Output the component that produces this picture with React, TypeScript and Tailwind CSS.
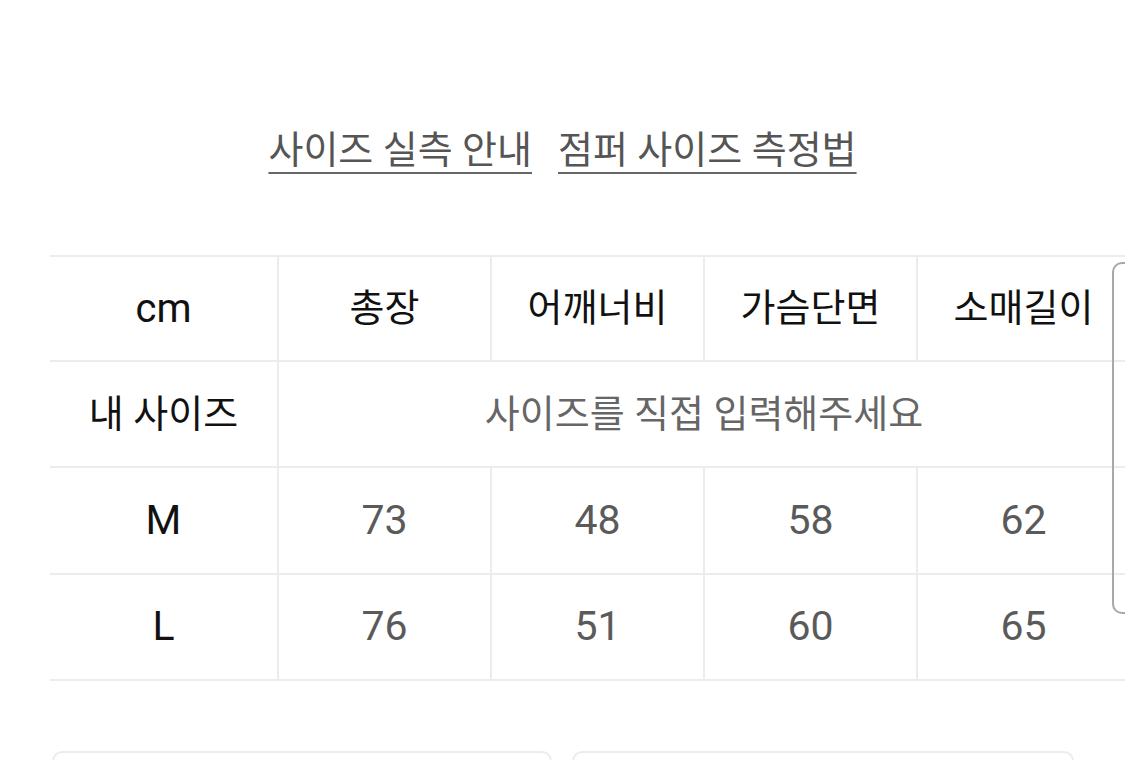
const font = "font-['Roboto','Noto_Sans_CJK_KR',sans-serif]";

const columns = ["총장", "어깨너비", "가슴단면", "소매길이"];
const sizes = [
  { name: "M", values: [73, 48, 58, 62], h: "h-[107px]" },
  { name: "L", values: [76, 51, 60, 65], h: "h-[106px]" },
];

function Cell({ children, first, className = "" }: { children: React.ReactNode; first?: boolean; className?: string }) {
  return (
    <div
      className={`flex h-full items-center justify-center ${first ? "w-[227px]" : "w-[213px] border-l-2 border-[#ececec]"} ${className}`}
    >
      {children}
    </div>
  );
}

export default function App() {
  return (
    <main className={`min-h-[760px] w-[1125px] overflow-hidden bg-white ${font}`}>
      <div className="flex justify-center gap-[26px] pt-[122px] text-[38px] leading-[56px] text-[#555]">
        <a className="underline decoration-[#666] decoration-[2px] underline-offset-[9px]">사이즈 실측 안내</a>
        <a className="underline decoration-[#666] decoration-[2px] underline-offset-[9px]">점퍼 사이즈 측정법</a>
      </div>

      <div className="relative mt-[77px] pl-[50px]">
        <div className="w-[1100px] border-t-2 border-[#ececec]">
          <div className="flex h-[105px] border-b-2 border-[#ececec] text-[38px] text-[#111]">
            <Cell first className="text-[40px]">cm</Cell>
            {columns.map((c) => (
              <Cell key={c}>{c}</Cell>
            ))}
          </div>
          <div className="flex h-[106px] border-b-2 border-[#ececec] text-[38px]">
            <Cell first className="text-[#111]">내 사이즈</Cell>
            <div className="flex h-full w-[852px] items-center justify-center border-l-2 border-[#ececec] text-[#666]">
              사이즈를 직접 입력해주세요
            </div>
          </div>
          {sizes.map((s) => (
            <div key={s.name} className={`flex border-b-2 border-[#ececec] text-[41px] ${s.h}`}>
              <Cell first className="text-[#111]">{s.name}</Cell>
              {s.values.map((v, i) => (
                <Cell key={i} className="text-[#5a5a5a]">{v}</Cell>
              ))}
            </div>
          ))}
        </div>
        <div className="absolute left-[1112px] top-[7px] h-[352px] w-[40px] rounded-[10px] border-2 border-[#a8a8a8]" />
      </div>

      <div className="mt-[70px] flex gap-[20px] pl-[52px]">
        <div className="h-[40px] w-[500px] rounded-[10px] border-2 border-[#ececec]" />
        <div className="h-[40px] w-[502px] rounded-[10px] border-2 border-[#ececec]" />
      </div>
    </main>
  );
}
